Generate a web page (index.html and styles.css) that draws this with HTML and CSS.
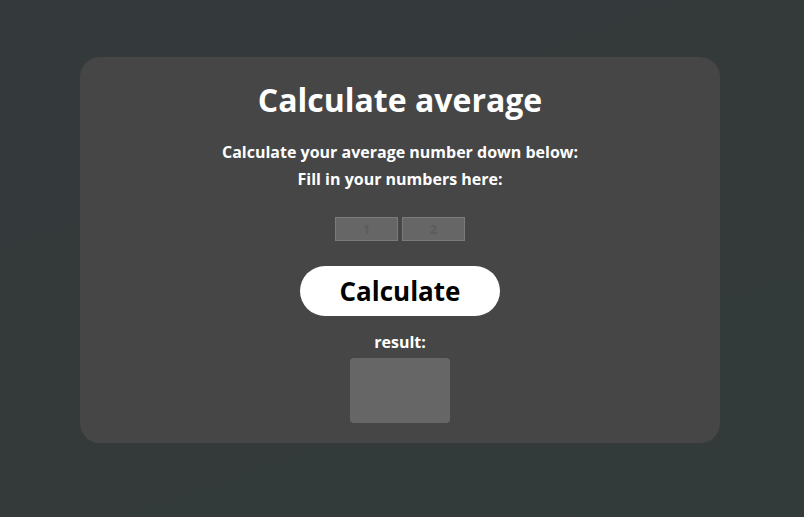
FILE: index.html
```html
<!DOCTYPE html>
<html>
<head>
<meta charset="utf-8">
<link rel="stylesheet" href="styles.css">
</head>
<body>
<main class="card">
  <h1 class="title">Calculate average</h1>
  <p class="intro">Calculate your average number down below:<br>Fill in your numbers here:</p>
  <div class="inputs">
    <input class="num" type="text" placeholder="1">
    <input class="num" type="text" placeholder="2">
  </div>
  <button class="calc">Calculate</button>
  <p class="result-label">result:</p>
  <div class="result"></div>
</main>
</body>
</html>
```

FILE: styles.css
```css
html, body {
  margin: 0;
  padding: 0;
}
body {
  width: 804px;
  height: 517px;
  overflow: hidden;
  background: linear-gradient(160deg, #343a3b 0%, #343a3a 60%, #333b3a 100%);
  font-family: "Open Sans", "Noto Sans", sans-serif;
  color: #ffffff;
}
.card {
  box-sizing: border-box;
  width: 640px;
  height: 386px;
  margin: 57px 0 0 80px;
  background: #464646;
  border-radius: 20px;
  display: flex;
  flex-direction: column;
  align-items: center;
  padding-top: 21px;
}
.title {
  margin: 0;
  font-size: 32px;
  font-weight: 700;
  line-height: 44px;
}
.intro {
  margin: 17px 0 0;
  font-size: 16px;
  font-weight: 700;
  line-height: 27px;
  text-align: center;
}
.inputs {
  display: flex;
  gap: 4px;
  margin-top: 24px;
}
.num {
  box-sizing: border-box;
  width: 63px;
  height: 24px;
  background: #666666;
  border: 1px solid #7a7a7a;
  border-radius: 0;
  padding: 0;
  outline: none;
  text-align: center;
  font-family: "Open Sans", sans-serif;
  font-weight: 700;
  font-size: 13px;
  color: #5c5c5c;
}
.num::placeholder {
  color: #5c5c5c;
  opacity: 1;
}
.calc {
  margin-top: 25px;
  width: 200px;
  height: 50px;
  border: none;
  border-radius: 25px;
  background: #ffffff;
  color: #000000;
  font-family: "Open Sans", sans-serif;
  font-weight: 700;
  font-size: 26px;
  padding: 0;
  line-height: 50px;
}
.result-label {
  margin: 14px 0 0;
  font-size: 16px;
  font-weight: 700;
  line-height: 24px;
}
.result {
  margin-top: 4px;
  width: 100px;
  height: 65px;
  background: #666666;
  border-radius: 4px;
}
```
